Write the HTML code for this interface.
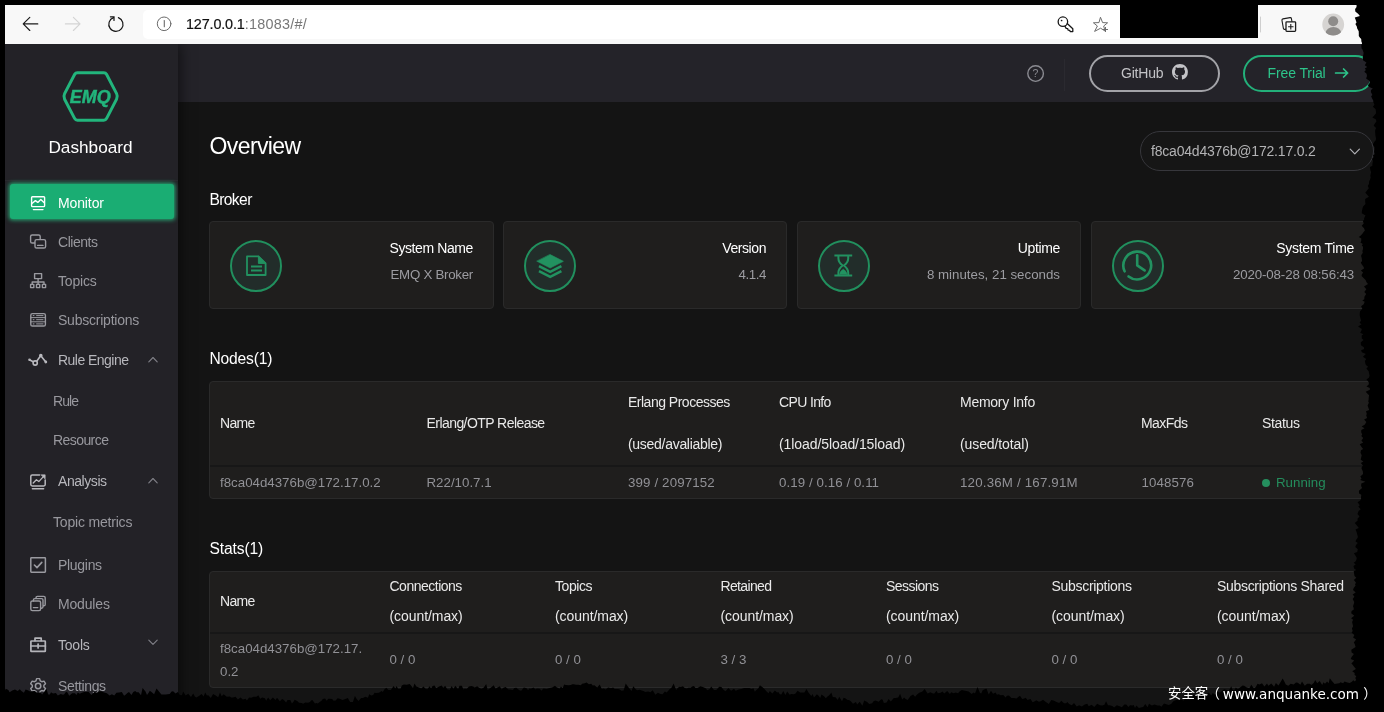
<!DOCTYPE html>
<html lang="en">
<head>
<meta charset="utf-8">
<title>Dashboard</title>
<style>
*{box-sizing:border-box;margin:0;padding:0}
html,body{width:1384px;height:712px;overflow:hidden;background:#000}
body{position:relative;font-family:"Liberation Sans","Noto Sans CJK SC",sans-serif;font-size:14px;color:#fff}
.abs{position:absolute}
#page{position:absolute;left:0;top:0;width:1384px;height:712px;overflow:hidden;background:#141414;will-change:transform}
/* browser chrome */
#chrome{position:absolute;left:0;top:0;width:1384px;height:44px;background:#f8f8f8;z-index:5}
#urlbox{position:absolute;left:143px;top:10px;width:980px;height:29px;background:#fff;border-radius:5px}
#url{position:absolute;left:186px;top:15px;font-size:14.4px;line-height:18px;color:#111;white-space:nowrap;letter-spacing:0}
#url b{font-weight:400;-webkit-text-stroke:.2px #111;letter-spacing:-.15px}
#url span{color:#777;letter-spacing:.25px}
#redact{position:absolute;left:1120px;top:0;width:137.5px;height:38px;background:#000}
/* sidebar */
#side{position:absolute;left:0;top:44px;width:178px;height:668px;background:#232227;box-shadow:3px 0 12px rgba(0,0,0,.5)}
#brand{position:absolute;left:4px;top:137px;width:173px;text-align:center;font-size:17.2px;line-height:20px;color:#fff}
.mi{position:absolute;left:58px;font-size:14px;line-height:20px;color:#98989e;white-space:nowrap}
.mi.sub{left:53px}
.mi.t{color:#b7b7bc}
#active{position:absolute;left:10px;top:184px;width:163.5px;height:35px;background:#1aad73;border-radius:3px;box-shadow:0 0 4.5px .5px rgba(40,210,140,.8)}
/* header */
#top{position:absolute;left:178px;top:44px;width:1206px;height:57.5px;background:#242329}
.pill{position:absolute;top:54.5px;height:37px;border-radius:19px;border:2px solid #a3a3a8;font-size:14px;line-height:33px;color:#c3c3c7;white-space:nowrap}
/* content */
h1{position:absolute;left:209.6px;top:130.6px;font-size:23px;line-height:30px;font-weight:400;color:#fff;white-space:nowrap;letter-spacing:-.62px}
.h2{position:absolute;left:209.4px;font-size:15.6px;line-height:20px;color:#fff;white-space:nowrap}
.card{position:absolute;top:221px;width:284px;height:88px;background:#1f1e1d;border:1px solid #2a2a2a;border-radius:4px}
.card .ic{position:absolute;left:20px;top:18px;width:52px;height:52px;border-radius:50%;background:#222d2a;border:2px solid #21905e}
.card .t{position:absolute;right:20px;top:16px;font-size:14px;line-height:20px;color:#fff;white-space:nowrap}
.card .v{position:absolute;right:20px;top:43px;font-size:13.3px;line-height:20px;color:#9c9ca1;white-space:nowrap}
.tbl{position:absolute;left:209px;width:1190px;background:#1f1e1d;border:1px solid #2a2a2a;border-radius:4px}
.th{position:absolute;font-size:14px;line-height:20px;color:#e9e9e9;white-space:nowrap}
.td{position:absolute;font-size:13.3px;line-height:20px;color:#919196;white-space:nowrap}
.hr{position:absolute;left:0;width:100%;height:2px;background:#171717}
#wm{will-change:transform;z-index:11;position:absolute;left:0;top:684px;width:1384px;height:20px;font-size:13.4px;line-height:20px;color:#fff;white-space:nowrap;font-family:"Liberation Sans","Noto Sans CJK SC",sans-serif}
#wm span{position:absolute;top:0}
#wm .l{font-family:"DejaVu Sans","Liberation Sans",sans-serif;font-size:13.55px}
</style>
</head>
<body>
<div id="page">
<!-- ============ browser chrome ============ -->
<div id="chrome">
  <div id="urlbox"></div>
  <svg class="abs" style="left:0;top:0" width="1384" height="44" viewBox="0 0 1384 44" fill="none" stroke-linecap="round" stroke-linejoin="round">
    <!-- back -->
    <path d="M37.8 23.9H23.6M29.8 17.3L23.2 23.9L29.8 30.5" stroke="#1b1b1b" stroke-width="1.15"/>
    <!-- forward -->
    <path d="M65.4 23.9H79.6M73.4 17.3L80 23.9L73.4 30.5" stroke="#d4d4d4" stroke-width="1.15"/>
    <!-- reload -->
    <path d="M118.4 17.65A7.1 7.1 0 1 1 113.6 17.58" stroke="#141414" stroke-width="1.2"/>
    <path d="M110.4 16.8H114V20.4" stroke="#141414" stroke-width="1.2" stroke-linejoin="miter"/>
    <!-- info -->
    <circle cx="164.1" cy="23.8" r="6.8" stroke="#6a6a6a" stroke-width="1"/>
    <path d="M164.3 20.6V26.8" stroke="#6a6a6a" stroke-width="1.1"/>
    <!-- key -->
    <circle cx="1062.9" cy="21.7" r="4.75" stroke="#161616" stroke-width="1.3"/>
    <circle cx="1061.6" cy="20.5" r=".85" fill="#161616" stroke="none"/>
    <path d="M1067.2 23.6L1072.8 28.8V31.6H1070.2L1069.6 30.3L1068.1 30.2L1067.7 28.6L1066.2 28.4L1065 26.4" stroke="#161616" stroke-width="1.3"/>
    <!-- star -->
    <path d="M1100.6 17.6L1102.6 22.6L1107.6 22.8L1103.7 26L1105 31L1100.6 28.2L1094.6 31.4L1097.4 26L1093.4 22.8L1098.6 22.6Z" stroke="#6e6e6e" stroke-width="1" stroke-linejoin="miter"/>
    <path d="M1105.5 27V32M1103 29.5H1108" stroke="#6e6e6e" stroke-width="1" stroke-linecap="butt"/>
    <!-- separator -->
    <path d="M1260.5 17V32" stroke="#cfcfcf" stroke-width="1"/>
    <!-- collections -->
    <rect x="1282.6" y="18.2" width="9.6" height="10.6" rx="1.2" stroke="#1c1c1c" stroke-width="1.1" transform="rotate(-10 1287.4 23.5)"/>
    <rect x="1286" y="21.8" width="9.6" height="9.6" rx=".8" fill="#f8f8f8" stroke="#1c1c1c" stroke-width="1.3"/>
    <path d="M1290.8 24V29.4M1288.1 26.7H1293.5" stroke="#1c1c1c" stroke-width="1.1" stroke-linecap="butt"/>
    <!-- avatar -->
    <clipPath id="avc"><circle cx="1333.2" cy="24.5" r="10.9"/></clipPath>
    <circle cx="1333.2" cy="24.5" r="10.9" fill="#d6d4d2" stroke="none"/>
    <circle cx="1333.2" cy="21.3" r="5" fill="#8e8c8a" stroke="none"/>
    <ellipse cx="1333.4" cy="33.2" rx="7.7" ry="6.2" fill="#8e8c8a" stroke="none" clip-path="url(#avc)"/>
  </svg>
  <div id="url"><b>127.0.0.1</b><span>:18083/#/</span></div>
  <div id="redact"></div>
</div>

<!-- ============ top header ============ -->
<div id="top"></div>
<svg class="abs" style="left:1020px;top:56px" width="60" height="36" viewBox="1020 56 60 36" fill="none">
  <circle cx="1035.6" cy="73.6" r="7.8" stroke="#8b8b92" stroke-width="1.4"/>
  <path d="M1064.5 59V91" stroke="#2b2a30" stroke-width="1"/>
</svg>
<div class="abs" style="left:1031px;top:66px;width:9px;text-align:center;font-size:10.5px;line-height:15px;color:#8b8b92">?</div>
<div class="pill" style="left:1089px;width:131px;padding-left:30px;letter-spacing:-.2px">GitHub</div>
<svg class="abs" style="left:1171.8px;top:64.1px" width="15.9" height="15.9" viewBox="0 0 16 16"><path fill="#c3c3c7" d="M8 0C3.58 0 0 3.58 0 8c0 3.54 2.29 6.53 5.47 7.59.4.07.55-.17.55-.38 0-.19-.01-.82-.01-1.49-2.01.37-2.53-.49-2.69-.94-.09-.23-.48-.94-.82-1.13-.28-.15-.68-.52-.01-.53.63-.01 1.08.58 1.23.82.72 1.21 1.87.87 2.33.66.07-.52.28-.87.51-1.07-1.78-.2-3.64-.89-3.64-3.95 0-.87.31-1.59.82-2.15-.08-.2-.36-1.02.08-2.12 0 0 .67-.21 2.2.82.64-.18 1.32-.27 2-.27s1.36.09 2 .27c1.53-1.04 2.2-.82 2.2-.82.44 1.1.16 1.92.08 2.12.51.56.82 1.27.82 2.15 0 3.07-1.87 3.75-3.65 3.95.29.25.54.73.54 1.48 0 1.07-.01 1.93-.01 2.2 0 .21.15.46.55.38A8.01 8.01 0 0 0 16 8c0-4.42-3.58-8-8-8z"/></svg>
<div class="pill" style="left:1243px;width:131px;padding-left:22.5px;letter-spacing:-.1px;border-color:#23b07a;color:#2dc48a">Free Trial</div>
<svg class="abs" style="left:1332px;top:64px" width="20" height="18" viewBox="0 0 20 18" fill="none" stroke="#2dc48a" stroke-width="1.7" stroke-linecap="round" stroke-linejoin="round"><path d="M3.6 9H15.6M11.6 5L15.6 9L11.6 13"/></svg>
<!-- ============ sidebar ============ -->
<div id="side"></div>
<svg class="abs" style="left:58px;top:66px" width="66" height="62" viewBox="58 66 66 62">
  <path d="M77.4 72.7H103.8Q105.6 72.7 106.5 74.3L116.6 93.6Q118 96.4 116.6 99.2L106.5 118.6Q105.6 120.2 103.8 120.2H77.4Q75.6 120.2 74.7 118.6L64.6 99.2Q63.2 96.4 64.6 93.6L74.7 74.3Q75.6 72.7 77.4 72.7Z" fill="none" stroke="#22b57c" stroke-width="3" stroke-linejoin="round"/>
  <text x="90.2" y="103.2" text-anchor="middle" font-family="Liberation Sans, sans-serif" font-weight="700" font-style="italic" font-size="18" fill="#22b57c" stroke="#22b57c" stroke-width=".45" letter-spacing="-0.1">EMQ</text>
</svg>
<div id="brand">Dashboard</div>
<div class="abs" style="left:5px;top:180px;width:173px;height:1px;background:#2a292e"></div>
<div id="active"></div>
<div class="mi" style="top:192.7px;color:#fff;letter-spacing:-0.12px">Monitor</div>
<div class="mi" style="top:231.5px;letter-spacing:-0.47px">Clients</div>
<div class="mi" style="top:270.5px;letter-spacing:-0.18px">Topics</div>
<div class="mi" style="top:309.5px;letter-spacing:-0.23px">Subscriptions</div>
<div class="mi t" style="top:349.5px;letter-spacing:-0.53px">Rule Engine</div>
<div class="mi sub" style="top:391px;letter-spacing:-0.90px">Rule</div>
<div class="mi sub" style="top:430px;letter-spacing:-0.57px">Resource</div>
<div class="mi t" style="top:471px;letter-spacing:-0.44px">Analysis</div>
<div class="mi sub" style="top:512px;letter-spacing:-0.19px">Topic metrics</div>
<div class="mi" style="top:555px;letter-spacing:-0.30px">Plugins</div>
<div class="mi" style="top:594px;letter-spacing:-0.17px">Modules</div>
<div class="mi t" style="top:635px;letter-spacing:-0.22px">Tools</div>
<div class="mi" style="top:676px;letter-spacing:-0.36px">Settings</div>
<svg class="abs" style="left:0;top:180px" width="178" height="532" viewBox="0 180 178 532" fill="none" stroke="#9a9aa0" stroke-width="1.4" stroke-linecap="round" stroke-linejoin="round">
  <!-- monitor -->
  <g stroke="#fff">
    <rect x="31.6" y="196.8" width="13" height="9.8" rx=".8"/>
    <path d="M32.2 203.2L35.4 200.6L37.8 202.4L40.8 199.6L44 202.6"/>
    <path d="M33.4 209.6H43"/>
  </g>
  <!-- clients -->
  <rect x="30.6" y="235" width="9.6" height="8" rx="1.6"/>
  <rect x="35" y="239.6" width="10.6" height="8.4" rx="1.6" fill="#232227"/>
  <path d="M37.6 245.4H43"/>
  <!-- topics -->
  <rect x="34.6" y="273.6" width="7" height="5"/>
  <path d="M38.1 278.6V282M32.2 284.4V282H44V284.4M38.1 282V284.4"/>
  <rect x="30.6" y="284.4" width="3.2" height="3.2"/>
  <rect x="36.5" y="284.4" width="3.2" height="3.2"/>
  <rect x="42.4" y="284.4" width="3.2" height="3.2"/>
  <!-- subscriptions -->
  <rect x="30.8" y="313.6" width="14.6" height="12.4" rx="1.6"/>
  <path d="M30.8 317.6H45.4M30.8 321.8H45.4M33.2 315.6H34M33.2 319.7H34M33.2 323.9H34M36.6 315.6H43M36.6 319.7H43M36.6 323.9H43" stroke-width="1"/>
  <!-- rule engine -->
  <g stroke="#b9b9be" stroke-width="1.6">
    <path d="M29.8 360L33.3 361.8M36.7 361.2L40.1 356.6M41.6 356.7L45.4 361.6"/>
    <circle cx="35.2" cy="363" r="2.1"/>
    <circle cx="40.8" cy="355.6" r="1" fill="#b9b9be"/>
    <circle cx="45.8" cy="362" r=".6" fill="#b9b9be"/>
    <circle cx="29.5" cy="359.8" r=".5" fill="#b9b9be"/>
    <path d="M148.8 361.8L153 357.5L157.2 361.8" stroke="#7f7f86" stroke-width="1.15"/>
  </g>
  <!-- analysis -->
  <g stroke="#b9b9be" stroke-width="1.5">
    <path d="M39.6 475H32.2Q30.8 475 30.8 476.4V484.6Q30.8 486 32.2 486H43.8Q45.2 486 45.2 484.6V480"/>
    <path d="M33.2 483L36.4 479.8L38.8 481.6L43.6 476.4" stroke-width="1.3"/>
    <path d="M41.2 474.8H45.2V478.8Z" fill="#b9b9be" stroke-width=".6"/>
    <path d="M32.4 488.8H43.6"/>
    <path d="M148.8 482.8L153 478.5L157.2 482.8" stroke="#7f7f86" stroke-width="1.15"/>
  </g>
  <!-- plugins -->
  <rect x="30.8" y="557.8" width="14.6" height="14.4" rx=".6" stroke-width="1.5"/>
  <path d="M34.4 565L37 567.6L41.8 562.4" stroke-width="1.6"/>
  <!-- modules -->
  <rect x="30.8" y="601" width="9.8" height="9.6" rx="1.6"/>
  <path d="M33.4 601V600Q33.4 598.6 34.8 598.6H41.6Q43 598.6 43 600V606.8Q43 608.2 41.6 608.2H40.6M36 598.6V597.8Q36 596.4 37.4 596.4H43.8Q45.2 596.4 45.2 597.8V604.4Q45.2 605.8 43.8 605.8H43M33.4 607.6H37.8"/>
  <!-- tools -->
  <g stroke="#b4b4b9" stroke-width="1.7">
    <rect x="30.9" y="641" width="14.4" height="10.4" rx=".5"/>
    <path d="M35 640.6V638.2H41.2V640.6M30.8 646H45.4M38.1 644V648" stroke-width="1.7"/>
    <path d="M148.8 640.2L153 644.4L157.2 640.2" stroke="#7f7f86" stroke-width="1.15"/>
  </g>
  <!-- settings -->
  <circle cx="38.1" cy="686" r="2.7" stroke-width="1.5"/>
  <path d="M36.6 678.6H39.6L40.2 680.8L41.8 681.7L44 681.1L45.5 683.7L43.9 685.3V686.9L45.5 688.5L44 691.1L41.8 690.5L40.2 691.4L39.6 693.6H36.6L36 691.4L34.4 690.5L32.2 691.1L30.7 688.5L32.3 686.9V685.3L30.7 683.7L32.2 681.1L34.4 681.7L36 680.8Z"/>
</svg>
<!-- ============ content ============ -->
<h1>Overview</h1>
<div class="abs" style="left:1140px;top:131px;width:233.5px;height:39.5px;border:1px solid #37373c;border-radius:20px;background:#161616"></div>
<div class="abs" style="left:1151px;top:141px;font-size:14px;line-height:20px;color:#b3b3b5;white-space:nowrap;letter-spacing:-.2px">f8ca04d4376b@172.17.0.2</div>
<svg class="abs" style="left:1346px;top:144px" width="18" height="14" viewBox="0 0 18 14" fill="none" stroke="#b0b0b5" stroke-width="1.2" stroke-linecap="round" stroke-linejoin="round"><path d="M4.2 5.2L8.8 9.8L13.4 5.2"/></svg>

<div class="h2" style="top:189.8px;letter-spacing:-.6px">Broker</div>
<div class="card" style="left:209px;width:285px"><div class="ic"></div><div class="t" style="letter-spacing:-.4px">System Name</div><div class="v" style="letter-spacing:-.27px">EMQ X Broker</div></div>
<div class="card" style="left:503px"><div class="ic"></div><div class="t" style="letter-spacing:-.43px">Version</div><div class="v" style="letter-spacing:-.4px">4.1.4</div></div>
<div class="card" style="left:797px"><div class="ic"></div><div class="t" style="letter-spacing:-.34px">Uptime</div><div class="v">8 minutes, 21 seconds</div></div>
<div class="card" style="left:1091px"><div class="ic"></div><div class="t" style="letter-spacing:-.29px">System Time</div><div class="v" style="letter-spacing:-.13px">2020-08-28 08:56:43</div></div>
<svg class="abs" style="left:209px;top:221px" width="1175" height="88" viewBox="209 221 1175 88" fill="none" stroke="#229260" stroke-width="1.4" stroke-linejoin="round" stroke-linecap="round">
  <!-- doc icon -->
  <path d="M247 256.4H258.4L265.6 263.4V275H247Z" stroke-width="1.8"/>
  <path d="M258.4 256.4V263.4H265.6Z" fill="#229260" stroke-width="1"/>
  <path d="M251 266.4H262M251 270.4H262" stroke-width="2" stroke-linecap="butt"/>
  <!-- layers icon -->
  <path d="M550.2 254.6L563.4 261.3L550.2 268L537 261.3Z" fill="#229260" stroke-width=".6"/>
  <path d="M539 266.2L550.2 271.9L561.4 266.2" stroke-width="2.6" stroke-linejoin="miter" stroke-linecap="butt"/>
  <path d="M539 271.2L550.2 276.9L561.4 271.2" stroke-width="2.6" stroke-linejoin="miter" stroke-linecap="butt"/>
  <!-- hourglass -->
  <path d="M834.4 255.5H852.2M834.4 275.5H852.2" stroke-width="2.2" stroke-linecap="butt"/>
  <path d="M838.4 256.4V258.4Q838.4 262 842.6 265.5Q838.4 269 838.4 272.6V274.6M848.2 256.4V258.4Q848.2 262 844 265.5Q848.2 269 848.2 272.6V274.6" stroke-width="2"/>
  <path d="M839.6 274.6Q839.8 271 843.3 269.2Q846.8 271 847 274.6Z" fill="#229260" stroke-width=".6"/>
  <!-- clock -->
  <path d="M1124.6 271.3A13.9 13.9 0 1 1 1128.6 276.4" stroke-width="2.6"/>
  <path d="M1137.2 255.2V265.4L1144.6 270.4" stroke-width="2.6"/>
</svg>

<div class="h2" style="top:349px;letter-spacing:-.15px">Nodes(1)</div>
<div class="tbl" style="top:381px;height:118px"><div class="hr" style="top:83px"></div></div>
<div class="th" style="left:220px;top:413px;letter-spacing:-0.70px">Name</div>
<div class="th" style="left:426.5px;top:413px;letter-spacing:-0.56px">Erlang/OTP Release</div>
<div class="th" style="left:628px;top:392.2px;letter-spacing:-0.50px">Erlang Processes</div>
<div class="th" style="left:628px;top:434px;letter-spacing:-0.29px">(used/avaliable)</div>
<div class="th" style="left:779px;top:392.2px;letter-spacing:-0.64px">CPU Info</div>
<div class="th" style="left:779px;top:434px;letter-spacing:-0.08px">(1load/5load/15load)</div>
<div class="th" style="left:960px;top:392.2px;letter-spacing:-0.26px">Memory Info</div>
<div class="th" style="left:960px;top:434px;letter-spacing:-0.10px">(used/total)</div>
<div class="th" style="left:1141px;top:413px;letter-spacing:-0.54px">MaxFds</div>
<div class="th" style="left:1262px;top:413px;letter-spacing:-0.36px">Status</div>
<div class="td" style="left:220px;top:472.5px">f8ca04d4376b@172.17.0.2</div>
<div class="td" style="left:426.5px;top:472.5px">R22/10.7.1</div>
<div class="td" style="left:628px;top:472.5px;letter-spacing:.14px">399 / 2097152</div>
<div class="td" style="left:779px;top:472.5px;letter-spacing:.07px">0.19 / 0.16 / 0.11</div>
<div class="td" style="left:960px;top:472.5px;letter-spacing:.19px">120.36M / 167.91M</div>
<div class="td" style="left:1141.6px;top:472.5px;letter-spacing:.1px">1048576</div>
<div class="abs" style="left:1262px;top:479px;width:8px;height:8px;border-radius:50%;background:#258f5e"></div>
<div class="td" style="left:1276px;top:472.5px;color:#248c5c">Running</div>

<div class="h2" style="top:539px;letter-spacing:-.1px">Stats(1)</div>
<div class="tbl" style="top:571px;height:117px"><div class="hr" style="top:60px"></div></div>
<div class="th" style="left:220px;top:591px;letter-spacing:-0.70px">Name</div>
<div class="th" style="left:389.5px;top:575.9px;letter-spacing:-0.50px">Connections</div>
<div class="th" style="left:389.5px;top:606.1px;letter-spacing:-0.07px">(count/max)</div>
<div class="th" style="left:555px;top:575.9px;letter-spacing:-0.45px">Topics</div>
<div class="th" style="left:555px;top:606.1px;letter-spacing:-0.07px">(count/max)</div>
<div class="th" style="left:720.5px;top:575.9px;letter-spacing:-0.65px">Retained</div>
<div class="th" style="left:720.5px;top:606.1px;letter-spacing:-0.07px">(count/max)</div>
<div class="th" style="left:886px;top:575.9px;letter-spacing:-0.56px">Sessions</div>
<div class="th" style="left:886px;top:606.1px;letter-spacing:-0.07px">(count/max)</div>
<div class="th" style="left:1051.5px;top:575.9px;letter-spacing:-0.30px">Subscriptions</div>
<div class="th" style="left:1051.5px;top:606.1px;letter-spacing:-0.07px">(count/max)</div>
<div class="th" style="left:1217px;top:575.9px;letter-spacing:-0.32px">Subscriptions Shared</div>
<div class="th" style="left:1217px;top:606.1px;letter-spacing:-0.07px">(count/max)</div>
<div class="td" style="left:220px;top:639px">f8ca04d4376b@172.17.</div>
<div class="td" style="left:220px;top:661.5px">0.2</div>
<div class="td" style="left:389.5px;top:649.5px">0 / 0</div>
<div class="td" style="left:555px;top:649.5px">0 / 0</div>
<div class="td" style="left:720.5px;top:649.5px">3 / 3</div>
<div class="td" style="left:886px;top:649.5px">0 / 0</div>
<div class="td" style="left:1051.5px;top:649.5px">0 / 0</div>
<div class="td" style="left:1217px;top:649.5px">0 / 0</div>
</div><!-- /page -->
<!-- torn paper edge mask -->
<svg class="abs" style="left:0;top:0;z-index:10" width="1384" height="712" viewBox="0 0 1384 712"><path fill="#000" fill-rule="evenodd" d="M0 0H1384 V712 H0Z M5 5 L1356.5 5 L1356.5 5.0 L1356.6 6.3 L1356.3 7.6 L1355.1 9.0 L1355.3 11.6 L1358.3 14.0 L1359.9 15.9 L1354.8 17.6 L1355.8 20.3 L1356.5 22.6 L1355.4 23.9 L1356.8 26.4 L1357.2 28.6 L1358.7 31.3 L1358.8 33.5 L1358.8 36.0 L1359.8 37.4 L1361.2 38.9 L1361.4 41.5 L1362.1 43.2 L1361.3 45.5 L1361.6 48.4 L1362.6 49.7 L1363.6 52.7 L1363.4 54.6 L1363.0 56.1 L1362.8 57.5 L1363.0 60.3 L1366.4 62.5 L1364.8 65.2 L1367.2 67.1 L1364.8 68.5 L1365.9 70.1 L1364.3 71.8 L1366.6 73.7 L1367.0 76.1 L1366.1 78.5 L1370.0 81.2 L1369.7 83.1 L1368.4 84.4 L1368.0 85.9 L1369.7 87.3 L1372.8 88.6 L1371.0 90.0 L1370.9 91.9 L1372.4 94.9 L1371.1 96.2 L1371.9 97.9 L1373.3 100.8 L1373.3 102.1 L1374.4 104.8 L1372.9 106.7 L1375.5 108.9 L1375.8 110.5 L1376.1 113.2 L1374.0 115.7 L1372.4 117.6 L1375.7 119.2 L1376.5 121.2 L1374.4 124.2 L1373.7 125.8 L1376.1 128.1 L1375.2 130.1 L1375.1 131.5 L1375.3 134.1 L1375.4 135.6 L1376.0 138.3 L1375.8 140.2 L1374.4 141.7 L1372.8 144.4 L1374.6 147.3 L1374.6 149.5 L1374.1 151.9 L1375.2 153.9 L1372.9 155.4 L1373.9 157.1 L1372.1 159.0 L1373.0 160.9 L1372.4 163.7 L1372.4 165.8 L1369.9 167.0 L1370.3 169.7 L1371.1 172.2 L1370.6 174.3 L1370.3 175.7 L1370.7 177.4 L1370.1 179.6 L1369.1 181.6 L1369.0 183.7 L1367.8 185.9 L1368.8 188.3 L1367.4 190.0 L1365.3 192.7 L1366.5 194.0 L1368.9 196.7 L1365.2 199.0 L1365.2 202.0 L1365.5 203.9 L1363.1 206.6 L1362.4 208.7 L1361.9 211.2 L1361.8 213.2 L1365.5 215.5 L1364.1 218.2 L1364.2 219.4 L1362.9 220.9 L1363.7 223.5 L1361.7 225.8 L1364.0 228.2 L1364.9 230.6 L1363.6 231.9 L1362.4 233.7 L1360.8 235.4 L1358.8 237.0 L1361.3 238.6 L1361.2 241.1 L1360.4 242.6 L1362.8 243.9 L1361.8 245.4 L1363.0 246.8 L1363.0 248.9 L1362.4 251.0 L1362.8 252.8 L1361.2 255.2 L1361.2 256.5 L1361.7 258.1 L1362.1 260.9 L1360.8 262.5 L1361.5 264.0 L1363.7 266.9 L1364.0 268.6 L1360.9 270.4 L1363.1 272.5 L1361.8 274.6 L1361.6 276.0 L1363.3 277.7 L1365.6 279.9 L1366.5 282.3 L1368.0 284.1 L1364.0 286.5 L1366.3 289.3 L1364.3 292.0 L1366.2 294.1 L1364.4 296.7 L1364.3 299.2 L1362.3 300.4 L1364.7 301.8 L1363.7 304.2 L1361.1 306.2 L1362.3 308.8 L1360.1 311.2 L1359.8 312.8 L1359.7 315.3 L1360.4 318.3 L1361.1 320.4 L1359.6 322.7 L1361.5 324.3 L1358.1 326.5 L1361.8 329.0 L1361.3 330.7 L1360.2 332.7 L1363.4 334.3 L1361.7 335.5 L1361.8 338.4 L1363.6 340.0 L1360.8 342.3 L1360.9 345.2 L1363.9 347.3 L1364.1 348.9 L1361.1 350.2 L1361.9 352.2 L1365.9 353.9 L1362.9 356.7 L1366.2 359.1 L1364.9 361.0 L1365.3 363.3 L1365.9 365.0 L1368.1 366.7 L1366.4 368.4 L1368.7 371.3 L1369.1 373.6 L1369.6 375.8 L1368.9 377.8 L1366.4 379.5 L1367.9 381.0 L1368.9 382.7 L1368.7 384.4 L1366.5 386.6 L1369.8 388.1 L1369.9 389.7 L1365.7 391.7 L1367.3 393.6 L1369.1 395.2 L1368.7 397.8 L1368.6 399.9 L1368.2 401.2 L1368.9 402.7 L1367.6 405.4 L1368.1 407.1 L1369.2 410.0 L1366.0 411.2 L1366.8 414.0 L1366.2 415.2 L1367.1 417.9 L1364.1 419.6 L1366.3 422.0 L1364.9 424.4 L1361.7 426.5 L1364.5 428.2 L1361.3 429.9 L1361.2 432.3 L1362.2 434.4 L1361.3 436.0 L1363.2 438.0 L1361.4 440.8 L1363.2 442.5 L1359.8 444.2 L1361.2 446.6 L1363.1 449.0 L1361.0 450.3 L1360.5 452.7 L1361.7 455.3 L1361.0 458.2 L1360.7 459.8 L1363.4 461.5 L1360.8 463.1 L1363.0 465.5 L1361.8 467.1 L1361.5 468.4 L1362.8 471.2 L1363.1 474.0 L1360.3 476.6 L1361.5 478.5 L1360.2 480.0 L1365.4 481.8 L1361.3 483.4 L1361.1 486.1 L1362.1 487.9 L1358.9 490.7 L1359.1 493.4 L1361.3 494.7 L1361.0 497.3 L1361.1 499.0 L1360.2 500.6 L1357.6 502.3 L1359.8 505.2 L1358.3 506.4 L1360.7 509.3 L1358.6 511.0 L1357.5 513.9 L1359.5 516.4 L1357.5 518.7 L1357.7 520.5 L1354.8 523.1 L1356.7 525.3 L1358.8 528.1 L1355.5 529.4 L1356.6 531.9 L1357.1 533.9 L1357.8 536.4 L1357.7 537.8 L1356.0 540.0 L1355.6 541.6 L1357.8 543.1 L1356.0 544.9 L1355.3 547.0 L1357.8 549.3 L1357.2 552.0 L1353.9 553.3 L1355.9 556.2 L1356.8 558.1 L1356.4 559.8 L1355.7 561.2 L1353.7 562.8 L1355.7 564.4 L1353.5 566.0 L1354.1 568.4 L1356.2 570.0 L1353.7 571.3 L1354.1 573.5 L1354.5 575.9 L1356.3 577.7 L1353.9 579.9 L1356.0 582.7 L1355.0 584.2 L1355.6 585.4 L1353.7 588.1 L1353.0 590.1 L1355.7 592.5 L1352.6 594.4 L1354.4 596.5 L1352.7 599.1 L1354.2 602.0 L1354.0 603.3 L1353.0 606.2 L1353.6 607.7 L1353.8 609.6 L1351.6 611.1 L1351.2 613.2 L1354.3 615.7 L1351.1 618.3 L1353.1 619.7 L1352.1 622.0 L1352.6 624.3 L1353.1 626.3 L1351.9 628.4 L1352.7 631.0 L1351.6 632.4 L1352.8 633.7 L1354.4 635.0 L1353.1 637.6 L1356.1 639.5 L1353.8 642.5 L1354.7 644.0 L1355.6 647.0 L1351.3 649.8 L1351.6 652.4 L1353.9 654.1 L1351.6 656.9 L1350.7 659.1 L1354.2 660.5 L1351.4 663.4 L1352.6 664.8 L1353.9 666.6 L1355.9 668.9 L1352.2 671.2 L1354.7 672.9 L1354.5 674.7 L1356.3 676.2 L1355.3 677.9 L1356.2 680.1 L1354.6 681.4 L1356.0 682.6 L1354.6 681.2 L1353.3 680.2 L1351.9 681.8 L1349.7 682.9 L1347.4 682.4 L1344.5 681.4 L1343.1 683.2 L1340.5 682.2 L1339.3 683.3 L1337.4 683.4 L1334.6 683.9 L1331.7 680.8 L1329.8 678.3 L1328.6 683.2 L1327.1 681.6 L1325.0 683.7 L1323.5 682.3 L1322.2 685.0 L1319.7 681.0 L1317.2 683.2 L1315.2 680.0 L1313.9 682.7 L1311.4 685.1 L1309.8 683.8 L1307.1 683.7 L1304.8 685.7 L1302.0 681.4 L1300.4 684.7 L1297.8 682.8 L1296.0 682.5 L1293.7 684.6 L1290.7 683.8 L1288.3 685.7 L1285.8 684.6 L1284.2 681.2 L1282.7 678.5 L1280.9 681.4 L1278.5 685.5 L1275.9 683.1 L1274.1 686.7 L1271.3 683.5 L1268.4 685.7 L1267.0 683.6 L1264.4 686.4 L1262.0 683.2 L1259.5 684.5 L1257.5 683.8 L1255.8 687.1 L1254.0 688.4 L1251.3 684.7 L1249.3 688.3 L1246.8 687.5 L1244.1 685.8 L1242.6 685.5 L1240.0 687.4 L1237.9 689.3 L1235.8 687.5 L1234.2 690.5 L1232.6 689.7 L1231.2 686.2 L1228.7 691.1 L1226.9 689.9 L1224.1 689.3 L1222.8 690.2 L1220.0 692.4 L1217.2 691.9 L1215.1 694.7 L1212.7 693.1 L1211.2 695.5 L1208.7 692.4 L1206.1 694.5 L1204.1 696.2 L1202.5 693.9 L1199.8 693.9 L1198.2 695.1 L1196.7 695.6 L1193.7 694.4 L1192.3 697.2 L1189.7 699.6 L1188.2 697.5 L1186.3 697.1 L1183.6 700.6 L1181.3 699.7 L1179.0 699.5 L1176.2 700.1 L1173.6 700.9 L1171.1 704.1 L1168.7 705.1 L1166.3 704.3 L1164.0 703.5 L1161.4 706.8 L1159.7 705.5 L1157.4 705.5 L1154.5 704.4 L1151.9 705.4 L1149.0 703.8 L1147.5 707.2 L1145.3 704.1 L1143.2 706.9 L1140.8 707.4 L1138.9 708.0 L1136.4 705.4 L1135.0 708.1 L1133.7 704.9 L1132.5 705.5 L1130.0 705.2 L1128.4 707.0 L1126.3 704.6 L1124.4 704.6 L1121.8 707.3 L1119.7 706.2 L1116.8 705.2 L1114.1 707.4 L1112.4 706.1 L1109.7 705.2 L1108.0 705.3 L1106.1 701.2 L1104.4 704.7 L1102.3 705.6 L1099.9 705.3 L1097.2 703.8 L1094.3 707.1 L1091.6 704.8 L1088.7 706.3 L1087.3 703.8 L1084.7 704.6 L1081.9 706.4 L1079.1 705.3 L1076.7 706.4 L1074.0 702.9 L1071.8 705.2 L1069.1 704.1 L1067.4 702.0 L1066.1 703.3 L1064.0 703.3 L1061.3 700.7 L1059.2 703.1 L1056.5 702.0 L1053.6 700.4 L1051.3 700.1 L1048.8 704.1 L1045.9 702.0 L1043.0 699.8 L1040.7 701.2 L1038.9 701.8 L1036.3 700.2 L1034.3 701.4 L1032.6 702.2 L1030.5 699.0 L1027.5 699.9 L1025.7 697.8 L1023.5 698.8 L1022.2 699.0 L1020.0 695.8 L1018.8 696.5 L1016.5 698.5 L1013.7 698.1 L1011.4 698.1 L1008.9 695.5 L1006.9 695.7 L1005.6 697.4 L1003.3 695.1 L1000.6 695.3 L998.9 694.3 L996.9 694.8 L995.6 692.4 L993.0 693.7 L991.0 690.7 L988.7 694.6 L986.6 688.8 L985.1 689.0 L982.6 690.2 L981.3 693.6 L980.0 692.9 L977.5 687.0 L975.0 693.5 L973.7 692.5 L971.6 693.9 L968.7 691.4 L966.3 691.1 L963.8 690.4 L961.8 689.9 L959.5 691.6 L958.1 693.3 L955.7 692.5 L953.8 693.2 L951.2 692.2 L949.9 694.1 L947.2 691.1 L944.2 693.4 L942.5 691.6 L940.6 692.8 L937.8 693.3 L936.6 690.8 L934.3 693.4 L933.0 693.4 L930.3 692.2 L927.6 693.4 L924.7 688.9 L922.1 691.7 L919.2 692.8 L916.8 694.8 L915.1 696.7 L913.1 694.4 L910.5 696.0 L907.7 699.9 L905.6 699.1 L904.1 697.5 L902.2 699.5 L900.1 693.7 L898.2 697.5 L895.6 697.9 L893.8 698.1 L890.8 701.6 L888.6 699.1 L886.6 702.5 L883.9 703.0 L882.7 699.7 L881.3 699.3 L878.6 701.7 L875.7 700.4 L873.8 700.9 L872.1 703.2 L869.2 704.1 L867.2 702.0 L864.2 700.4 L862.4 705.7 L859.7 701.8 L857.2 704.4 L855.9 702.0 L853.0 703.8 L850.8 701.3 L849.1 700.1 L847.6 700.1 L845.2 698.2 L843.6 697.8 L842.0 701.3 L839.2 696.8 L837.8 700.0 L835.5 697.2 L832.8 696.9 L831.4 692.4 L829.2 695.3 L827.5 696.4 L825.8 698.3 L824.3 696.6 L821.5 694.6 L820.2 698.0 L818.6 695.8 L816.9 694.3 L814.0 697.5 L812.6 694.1 L811.3 695.9 L808.3 692.2 L806.5 689.0 L804.4 692.6 L801.5 692.6 L800.1 692.4 L797.6 690.8 L795.3 693.8 L793.7 694.3 L791.1 694.0 L789.7 694.7 L787.2 691.4 L785.4 694.9 L783.3 690.9 L781.3 694.6 L779.8 694.3 L778.3 692.0 L777.1 692.6 L774.9 690.5 L772.3 693.6 L769.8 691.1 L768.5 693.2 L766.4 691.3 L764.2 688.8 L762.6 687.3 L759.9 685.2 L758.4 688.2 L756.1 690.3 L754.8 691.8 L753.5 688.3 L751.4 688.9 L749.4 688.1 L746.7 688.0 L744.2 688.0 L741.3 689.0 L738.6 689.6 L735.7 690.7 L734.0 688.7 L731.1 690.8 L728.4 688.1 L725.5 691.2 L723.5 689.7 L721.4 687.1 L719.2 686.7 L716.3 690.1 L714.0 690.1 L711.2 686.4 L709.5 689.2 L707.3 690.3 L705.7 688.3 L702.8 687.1 L700.4 686.2 L697.5 687.9 L695.4 687.9 L694.0 686.0 L692.1 686.6 L690.7 687.8 L688.4 687.8 L686.9 688.4 L684.7 688.0 L682.9 686.2 L680.8 686.9 L679.6 686.7 L677.9 687.8 L676.2 690.1 L673.6 683.4 L671.6 687.4 L669.6 689.3 L666.7 692.6 L664.9 691.4 L662.6 694.3 L660.5 694.0 L657.9 692.8 L655.4 694.7 L652.7 690.3 L650.4 692.3 L648.2 691.6 L645.4 692.1 L643.4 691.1 L641.7 690.5 L639.8 689.8 L637.0 690.2 L635.5 689.0 L633.3 686.2 L631.5 690.9 L628.6 687.6 L625.7 683.6 L623.6 690.5 L621.5 690.8 L619.3 689.3 L617.5 688.9 L614.6 689.1 L613.2 687.6 L611.0 688.3 L608.1 687.6 L605.7 689.6 L603.6 688.5 L601.8 688.9 L599.7 684.6 L597.2 687.5 L594.4 685.2 L592.7 685.4 L591.2 683.7 L588.9 684.2 L586.6 682.6 L583.9 683.6 L582.7 683.5 L580.5 685.2 L578.4 684.7 L576.0 684.7 L573.8 684.3 L572.3 684.3 L570.8 685.1 L568.5 685.3 L565.9 685.0 L564.1 684.6 L562.7 688.3 L560.9 686.5 L559.6 688.8 L556.6 687.3 L555.0 685.8 L552.2 687.6 L549.6 687.9 L546.6 689.1 L545.0 688.8 L543.4 688.5 L541.3 690.8 L539.8 688.8 L536.9 688.5 L535.5 689.6 L533.5 687.5 L530.9 688.8 L529.3 688.4 L528.1 690.2 L526.6 688.2 L523.9 687.6 L521.2 690.7 L519.3 690.3 L516.4 687.8 L514.3 687.9 L512.9 690.0 L510.0 689.4 L508.4 689.5 L505.6 687.1 L503.4 687.8 L501.6 689.5 L499.8 686.2 L497.1 687.8 L495.7 688.8 L493.6 685.3 L492.0 686.7 L490.3 688.0 L487.7 690.1 L486.2 684.1 L483.8 687.5 L481.4 689.1 L478.7 687.4 L477.2 686.3 L474.7 687.4 L473.2 686.6 L471.3 685.9 L468.9 686.5 L466.7 688.9 L464.7 688.8 L463.5 689.4 L461.8 685.8 L459.5 685.8 L458.1 689.2 L455.3 685.8 L453.4 689.0 L451.7 686.0 L449.7 689.8 L447.2 689.3 L445.2 685.7 L443.2 687.8 L441.7 685.6 L439.1 686.5 L436.2 688.2 L434.5 685.5 L432.6 686.1 L431.1 688.4 L429.5 686.2 L427.5 689.3 L425.7 689.1 L423.5 686.5 L421.3 688.4 L418.9 687.6 L416.4 686.4 L414.5 683.5 L413.0 687.9 L411.6 686.2 L409.7 683.9 L406.7 684.8 L403.8 684.5 L401.8 685.5 L400.6 688.8 L398.2 688.9 L396.6 685.9 L395.3 688.4 L393.6 686.0 L390.9 689.9 L388.3 690.1 L386.5 687.7 L384.7 689.1 L382.8 691.9 L381.6 691.1 L378.9 692.8 L376.0 693.0 L374.5 692.7 L373.2 695.0 L371.2 695.5 L369.2 694.3 L368.0 697.7 L365.3 696.8 L363.0 697.9 L361.1 698.1 L358.5 700.9 L356.7 699.1 L354.9 695.9 L352.9 702.0 L350.1 702.1 L347.8 698.1 L345.5 699.0 L342.6 699.9 L340.8 699.3 L339.6 698.7 L337.6 698.3 L335.7 700.6 L333.6 700.7 L332.2 699.0 L330.0 698.8 L328.3 698.8 L326.7 700.7 L325.1 698.4 L322.8 699.1 L321.5 700.8 L319.3 702.2 L317.9 703.6 L316.5 702.9 L315.0 703.6 L312.4 699.9 L311.1 700.5 L309.9 702.1 L308.1 702.7 L305.3 702.4 L303.1 703.8 L301.6 703.0 L299.0 702.7 L297.6 701.3 L294.7 699.8 L293.3 701.9 L291.9 703.6 L290.3 700.1 L287.5 700.1 L286.1 702.5 L283.9 699.9 L282.1 699.0 L279.9 701.3 L277.0 697.8 L275.5 699.9 L272.9 697.5 L270.2 700.2 L268.1 697.6 L266.2 700.8 L264.9 698.2 L262.1 697.4 L260.2 698.8 L258.3 695.3 L256.5 696.7 L253.6 696.7 L251.2 697.7 L249.1 697.5 L246.9 700.6 L245.6 698.7 L242.9 699.5 L240.5 697.4 L237.9 699.6 L235.5 696.7 L232.9 697.5 L231.1 697.5 L229.8 696.4 L226.8 696.8 L225.2 695.5 L223.7 694.3 L221.7 696.2 L220.0 692.5 L218.2 697.2 L215.3 695.2 L213.1 693.9 L210.8 697.9 L208.3 695.2 L206.9 695.4 L205.2 692.4 L203.6 696.4 L201.6 694.0 L198.9 696.1 L196.4 697.5 L195.0 696.8 L193.2 693.6 L191.0 696.9 L188.2 693.7 L185.6 695.6 L183.2 691.5 L181.9 695.3 L179.8 695.0 L177.8 692.1 L175.6 693.4 L173.1 691.3 L171.6 691.6 L169.7 693.9 L167.5 694.3 L165.7 694.6 L163.2 694.5 L161.4 694.5 L159.4 692.1 L156.5 688.6 L154.1 694.2 L151.2 691.7 L149.8 690.7 L148.5 692.9 L147.0 694.9 L145.5 691.4 L142.6 688.0 L141.0 695.2 L138.6 692.3 L136.6 692.3 L135.2 691.1 L133.3 691.9 L131.4 695.1 L129.0 692.0 L127.4 693.0 L125.8 694.6 L124.1 695.7 L121.8 691.9 L119.1 692.5 L116.4 692.7 L114.3 695.5 L111.9 694.2 L109.6 695.6 L106.9 693.2 L104.1 692.4 L101.1 691.2 L98.2 691.6 L96.7 693.1 L94.3 692.0 L91.4 694.9 L88.4 691.8 L85.8 692.0 L84.2 692.0 L81.2 693.1 L79.8 693.8 L77.8 692.4 L76.4 695.0 L75.0 693.2 L72.1 693.2 L69.2 695.7 L67.5 692.4 L66.1 691.8 L64.2 694.2 L63.0 694.8 L60.8 694.1 L57.8 695.6 L55.9 693.1 L53.0 693.4 L51.0 692.3 L49.8 694.4 L48.2 694.4 L46.5 688.9 L43.9 692.5 L42.1 694.4 L40.4 692.3 L37.6 693.0 L34.6 691.1 L32.1 691.2 L30.2 691.5 L27.8 690.2 L25.6 689.6 L23.9 692.8 L21.4 691.0 L19.8 689.2 L17.7 690.9 L15.0 689.4 L12.3 690.4 L9.6 692.3 L8.4 689.9 L5.7 688.7 L5.0 690.5 Z"/></svg>
<div id="wm"><span style="left:1168px">安全客</span><span style="left:1206.6px">（</span><span class="l" style="left:1222.8px">www.anquanke.com</span><span style="left:1363.2px">）</span></div>
</body></html>
